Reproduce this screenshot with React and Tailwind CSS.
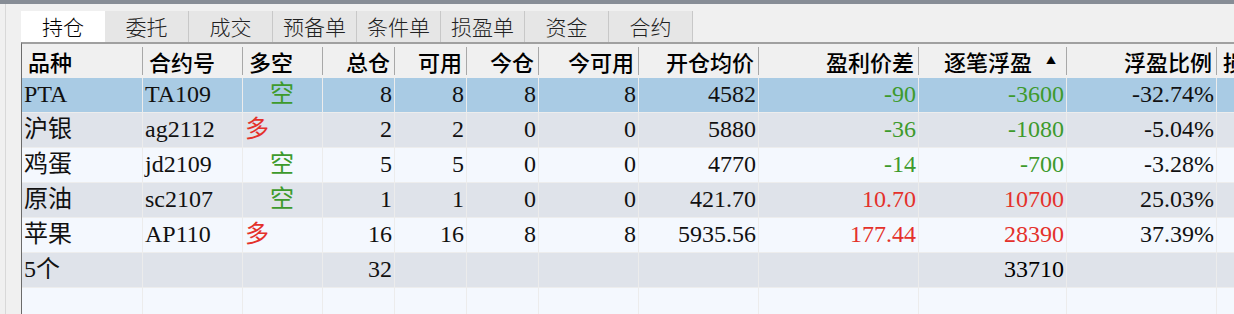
import React from "react";

const tabs = ["持仓", "委托", "成交", "预备单", "条件单", "损盈单", "资金", "合约"];

const cols = [
  { label: "品种", w: "w-[121px]", left: true },
  { label: "合约号", w: "w-[100px]", left: true },
  { label: "多空", w: "w-[80px]", left: true },
  { label: "总仓", w: "w-[72px]" },
  { label: "可用", w: "w-[72px]" },
  { label: "今仓", w: "w-[72px]" },
  { label: "今可用", w: "w-[100px]" },
  { label: "开仓均价", w: "w-[120px]" },
  { label: "盈利价差", w: "w-[160px]" },
  { label: "逐笔浮盈", w: "w-[148px]", sort: true },
  { label: "浮盈比例", w: "w-[150px]" },
  { label: "损盈", w: "w-[120px]", left: true },
];

const G = "text-[#3d9a2c]";
const R = "text-[#e4312b]";

const rows = [
  { sel: true, cells: ["PTA", "TA109", "空", "8", "8", "8", "8", "4582", "-90", "-3600", "-32.74%", ""] },
  { cells: ["沪银", "ag2112", "多", "2", "2", "0", "0", "5880", "-36", "-1080", "-5.04%", ""] },
  { cells: ["鸡蛋", "jd2109", "空", "5", "5", "0", "0", "4770", "-14", "-700", "-3.28%", ""] },
  { cells: ["原油", "sc2107", "空", "1", "1", "0", "0", "421.70", "10.70", "10700", "25.03%", ""] },
  { cells: ["苹果", "AP110", "多", "16", "16", "8", "8", "5935.56", "177.44", "28390", "37.39%", ""] },
  { cells: ["5个", "", "", "32", "", "", "", "", "", "33710", "", ""] },
  { cells: ["", "", "", "", "", "", "", "", "", "", "", ""] },
];

const serif = { fontFamily: '"Liberation Serif", "Noto Sans CJK SC", serif' };

function cellColor(ci, v) {
  if (ci === 2) return v === "空" ? G : R;
  if (ci === 8 || ci === 9) {
    if (v.startsWith("-")) return G;
    if (v === "33710") return "text-black";
    return R;
  }
  return "text-[#111]";
}

export default function App() {
  return (
    <div className="w-[1234px] h-[314px] overflow-hidden bg-[#f0f0f0] flex flex-col">
      <div className="h-[4px] bg-[#878d96] shrink-0" />
      <div className="flex flex-1 min-h-0">
        <div className="w-[6px] border-r border-[#d8d8d8] shrink-0" />
        <div className="w-[15px] shrink-0" />
        <div className="flex-1 min-w-0 flex flex-col">
          <div className="h-[7px] shrink-0" />
          <div className="flex h-[31px] shrink-0 font-['Noto_Sans_CJK_SC',sans-serif] font-light text-[21px] text-[#222]">
            {tabs.map((t, i) => (
              <div
                key={t}
                className={
                  i === 0
                    ? "w-[84px] bg-white flex items-center justify-center text-black"
                    : "w-[84px] bg-[#e6e6e6] border-r border-[#c8c8c8] flex items-center justify-center"
                }
              >
                {t}
              </div>
            ))}
          </div>
          <div className="flex-1 min-h-0 border-t-2 border-l border-[#a0a0a0] border-l-[#6b6b6b] bg-[#f4f8fe] overflow-hidden">
            <div className="flex h-[34px] bg-[#f0f0f0] font-['Noto_Sans_CJK_SC',sans-serif] font-medium text-[22px] text-black">
              {cols.map((c, i) => (
                <div
                  key={c.label}
                  className={`${c.w} shrink-0 flex items-center py-[3px]`}
                >
                  <div
                    className={`flex-1 h-full flex items-center border-r border-[#a8a8a8] ${
                      c.left ? "justify-start pl-[6px]" : "justify-end pr-[4px]"
                    }`}
                  >
                    {c.label}
                    {c.sort && <span className="text-[10px] ml-[14px] mr-[6px] mt-[-4px]">▲</span>}
                  </div>
                </div>
              ))}
            </div>
            {rows.map((r, ri) => (
              <div
                key={ri}
                className={`flex h-[35px] border-b border-[#ededed] ${
                  r.sel ? "bg-[#a9cbe4]" : ri % 2 === 1 ? "bg-[#dfe3ea]" : "bg-[#f4f8fe]"
                }`}
              >
                {r.cells.map((v, ci) => (
                  <div
                    key={ci}
                    style={serif}
                    className={`${cols[ci].w} shrink-0 border-r border-[#ececec] flex items-start pt-[3px] text-[24px] leading-[26px] whitespace-nowrap ${
                      ci === 2
                        ? v === "空"
                          ? "justify-start pl-[27px]"
                          : "justify-start pl-[2px]"
                        : cols[ci].left
                        ? "justify-start pl-[2px]"
                        : "justify-end pr-[2px]"
                    } ${cellColor(ci, v)}`}
                  >
                    {v}
                  </div>
                ))}
              </div>
            ))}
          </div>
        </div>
      </div>
    </div>
  );
}
